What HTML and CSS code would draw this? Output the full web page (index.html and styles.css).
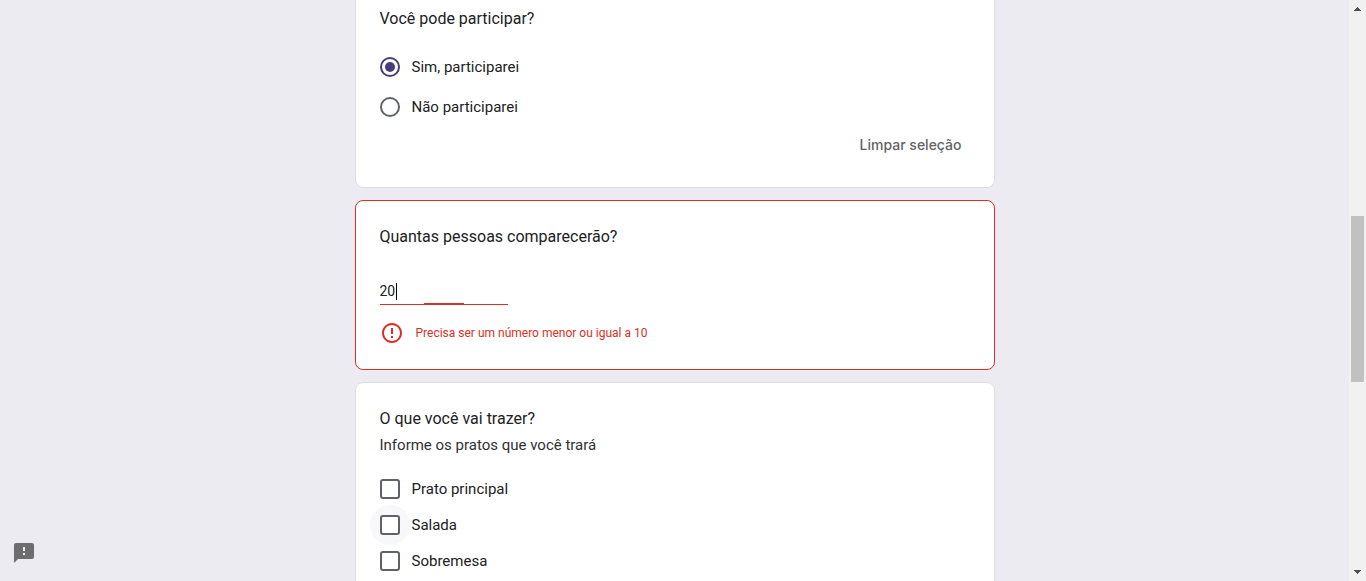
FILE: index.html
```html
<!DOCTYPE html>
<html lang="pt-BR">
<head>
<meta charset="utf-8">
<meta name="viewport" content="width=device-width, initial-scale=1">
<title>Formulário de participação</title>
<link rel="stylesheet" href="styles.css">
</head>
<body class="page">
<main class="content">
  <form class="form">
    <fieldset class="card card-continued">
      <div class="question" id="q1">Você pode participar?</div>
      <div class="radios" role="radiogroup" aria-labelledby="q1">
        <label class="option"><input class="radio" type="radio" name="participa" checked><span>Sim, participarei</span></label>
        <label class="option"><input class="radio" type="radio" name="participa"><span>Não participarei</span></label>
      </div>
      <div class="actions"><button class="clear" type="button">Limpar seleção</button></div>
    </fieldset>

    <div class="card card-error">
      <label class="question" for="pessoas">Quantas pessoas comparecerão?</label>
      <div class="field">
        <input class="text-input" id="pessoas" type="text" value="20" aria-invalid="true" aria-describedby="erro">
        <span class="caret"></span>
        <span class="focus-line"></span>
      </div>
      <div class="error" id="erro">
        <svg class="error-icon" viewBox="0 0 24 24" aria-hidden="true"><path d="M11 15h2v2h-2zm0-8h2v6h-2zm.99-5C6.47 2 2 6.48 2 12s4.47 10 9.99 10C17.52 22 22 17.52 22 12S17.52 2 11.99 2zM12 20c-4.42 0-8-3.58-8-8s3.58-8 8-8 8 3.58 8 8-3.58 8-8 8z"/></svg>
        <span>Precisa ser um número menor ou igual a 10</span>
      </div>
    </div>

    <fieldset class="card">
      <div class="question">O que você vai trazer?</div>
      <div class="description">Informe os pratos que você trará</div>
      <div class="checks">
        <label class="option"><input class="check" type="checkbox"><span>Prato principal</span></label>
        <label class="option option-hover"><input class="check" type="checkbox"><span>Salada</span></label>
        <label class="option"><input class="check" type="checkbox"><span>Sobremesa</span></label>
      </div>
    </fieldset>
  </form>
  <button class="report" type="button" aria-label="Informar um problema">
    <svg class="report-icon" viewBox="0 0 24 24" aria-hidden="true"><path d="M20 2H4c-1.100 0-2 .9-2 2v18l4-4h14c1.100 0 2-.9 2-2V4c0-1.100-.9-2-2-2zm-7 12h-2v-2h2v2zm0-4h-2V6h2v4z"/></svg>
  </button>
</main>
<div class="scrollbar" aria-hidden="true">
  <svg class="arrow" viewBox="0 0 17 17"><path d="M5 11h7v-1h-1V9h-1V8H9V7H8v1H7v1H6v1H5z"/></svg>
  <div class="track"><div class="thumb"></div></div>
  <svg class="arrow" viewBox="0 0 17 17"><path d="M5 6h7v1h-1v1h-1v1H9v1H8V9H7V8H6V7H5z"/></svg>
</div>
</body>
</html>
```

FILE: styles.css
```css
* { box-sizing: border-box; }

.page {
  margin: 0;
  height: 100vh;
  display: flex;
  overflow: hidden;
  background: #ecebf1;
  color: #202124;
  font-family: Roboto, Arial, sans-serif;
  font-size: 15px;
  line-height: 20px;
}

.content {
  flex: 1;
  min-width: 0;
  overflow: hidden;
}

.form {
  max-width: 640px;
  margin: 0 auto;
  display: flex;
  flex-direction: column;
  gap: 12px;
}

.card {
  min-width: 0;
  margin: 0;
  padding: 24px;
  background: #fff;
  border: 1px solid #dadce0;
  border-radius: 8px;
}

.card-continued {
  padding-top: 7px;
  border-top: 0;
  border-radius: 0 0 8px 8px;
}

.card-error { border-color: #d93025; }

.question {
  display: block;
  font-size: 16px;
  line-height: 24px;
}

.description {
  margin-top: 4px;
  color: #303134;
}

.radios {
  display: grid;
  gap: 20px;
  margin-top: 26px;
}

.checks {
  display: grid;
  gap: 16px;
  margin-top: 24px;
}

.option {
  position: relative;
  display: flex;
  align-items: center;
  gap: 12px;
}

.option-hover::before {
  content: "";
  position: absolute;
  left: -10px;
  top: -10px;
  width: 40px;
  height: 40px;
  border-radius: 50%;
  background: #f8f8fb;
}

.radio,
.check {
  position: relative;
  appearance: none;
  flex: none;
  width: 20px;
  height: 20px;
  margin: 0;
  border: 2px solid #5f6368;
  background: #fff;
}

.radio {
  display: grid;
  place-items: center;
  border-radius: 50%;
}

.radio:checked { border-color: #483c7f; }

.radio:checked::before {
  content: "";
  width: 10px;
  height: 10px;
  border-radius: 50%;
  background: #483c7f;
}

.check { border-radius: 3px; }

.actions {
  display: flex;
  justify-content: flex-end;
  margin-top: 10px;
}

.clear {
  height: 36px;
  padding: 0 8px;
  border: 0;
  background: none;
  color: #5f6368;
  font: 500 14px/20px Inter, Roboto, Arial, sans-serif;
}

.field {
  position: relative;
  width: 128px;
  margin-top: 31px;
}

.text-input {
  display: block;
  width: 100%;
  height: 25px;
  padding: 0 0 2px;
  border: 0;
  border-bottom: 1px solid #d93025;
  outline: 0;
  background: none;
  color: inherit;
  font: 14px/22px Roboto, Arial, sans-serif;
}

.caret {
  position: absolute;
  left: 16px;
  top: 3px;
  width: 1px;
  height: 17px;
  background: #000;
}

.focus-line {
  position: absolute;
  left: 44px;
  bottom: 0;
  width: 40px;
  height: 2px;
  background: #d93025;
}

.error {
  display: flex;
  align-items: center;
  gap: 12px;
  margin-top: 16px;
  color: #d93025;
  font-size: 12px;
}

.error-icon {
  flex: none;
  width: 24px;
  height: 24px;
  fill: #d93025;
}

.report {
  position: fixed;
  left: 12px;
  bottom: 16px;
  width: 24px;
  height: 24px;
  padding: 0;
  border: 0;
  background: none;
}

.report-icon {
  display: block;
  fill: #6d6d70;
}

.scrollbar {
  flex: none;
  width: 17px;
  display: flex;
  flex-direction: column;
  background: #f1f1f1;
}

.arrow {
  width: 17px;
  height: 17px;
  fill: #505050;
}

.track {
  flex: 1;
  padding: 0 2px;
}

.track::before {
  content: "";
  display: block;
  height: 199px;
}

.thumb {
  height: 166px;
  background: #c1c1c1;
}
```
